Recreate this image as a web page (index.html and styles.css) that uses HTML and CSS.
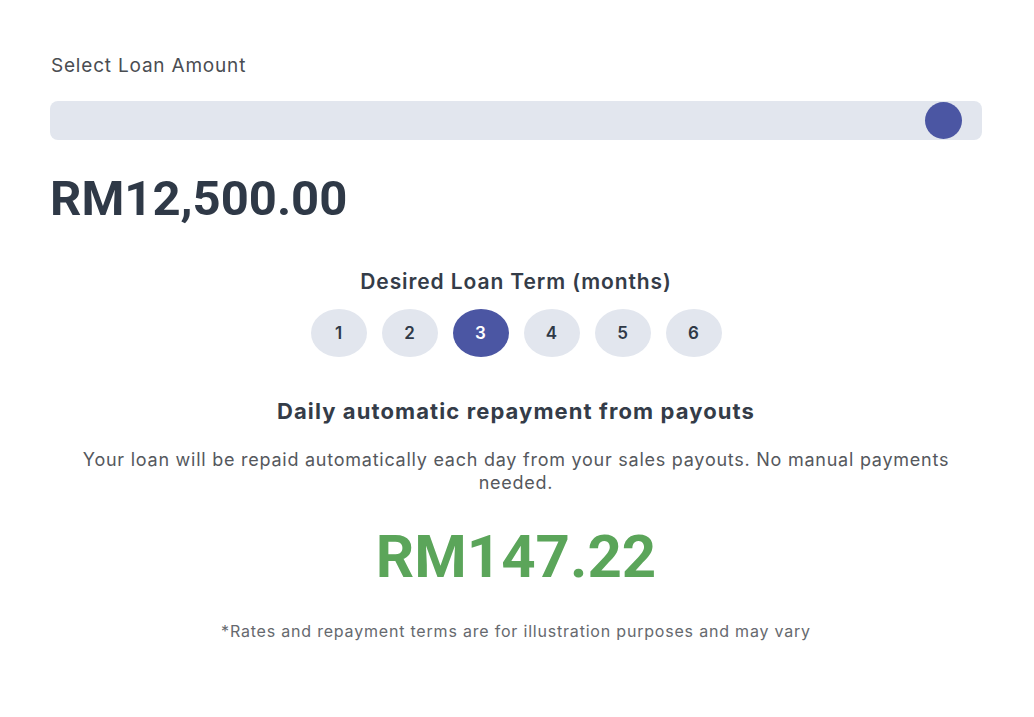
FILE: index.html
```html
<!DOCTYPE html>
<html lang="en">
<head>
    <meta charset="UTF-8">
    <meta name="viewport" content="width=device-width, initial-scale=1.0">
    <title>Loan Calculator</title>
    <link rel="stylesheet" href="styles.css">
</head>
<body>
    <div class="calculator">
        <label class="field-label">Select Loan Amount</label>

        <div class="amount-slider">
            <div class="slider-thumb"></div>
        </div>

        <div class="loan-amount">RM12,500.00</div>

        <div class="term-section">
            <h3 class="term-title">Desired Loan Term (months)</h3>
            <div class="term-options">
                <button class="term-option">1</button>
                <button class="term-option">2</button>
                <button class="term-option active">3</button>
                <button class="term-option">4</button>
                <button class="term-option">5</button>
                <button class="term-option">6</button>
            </div>
        </div>

        <div class="repayment">
            <h3 class="repayment-title">Daily automatic repayment from payouts</h3>
            <p class="repayment-text">Your loan will be repaid automatically each day from your sales payouts. No manual payments needed.</p>
            <div class="repayment-amount">RM147.22</div>
            <p class="disclaimer">*Rates and repayment terms are for illustration purposes and may vary</p>
        </div>
    </div>
</body>
</html>
```

FILE: styles.css
```css
body {
    margin: 0;
    background: #ffffff;
    font-family: Inter, "Liberation Sans", sans-serif;
    color: #333c48;
}

.calculator {
    padding: 54px 52px 40px 50px;
}

.field-label {
    display: block;
    margin-left: 1px;
    font-size: 19px;
    letter-spacing: 0.8px;
    color: #4a4d52;
    line-height: 24px;
}

.amount-slider {
    margin-top: 23px;
    height: 39px;
    background: #e2e6ee;
    border-radius: 8px;
    display: flex;
    align-items: center;
    justify-content: flex-end;
    padding-right: 20px;
}

.slider-thumb {
    width: 37px;
    height: 37px;
    border-radius: 50%;
    background: #4b56a3;
}

/* big money figures use a narrower face */
.loan-amount,
.repayment-amount {
    font-family: Roboto, "Liberation Sans", sans-serif;
    font-weight: 700;
}

.loan-amount {
    margin-top: 30px;
    font-size: 49px;
    color: #2f3947;
    line-height: 58px;
}

.term-section {
    margin-top: 40px;
    text-align: center;
}

.term-title {
    margin: 0;
    font-size: 21px;
    font-weight: 600;
    letter-spacing: 0.9px;
    line-height: 28px;
    color: #343c48;
}

.term-options {
    display: flex;
    justify-content: center;
    gap: 15px;
    margin-top: 13px;
}

.term-option {
    width: 56px;
    height: 48px;
    border: none;
    border-radius: 50%;
    background: #e2e6ee;
    font-family: inherit;
    font-size: 17px;
    font-weight: 600;
    color: #2f3947;
}

.term-option.active {
    background: #4b56a3;
    color: #ffffff;
}

.repayment {
    margin-top: 40px;
    text-align: center;
}

.repayment-title {
    margin: 0;
    font-size: 22px;
    font-weight: 700;
    letter-spacing: 1.1px;
    line-height: 28px;
    color: #343c48;
}

.repayment-text {
    margin: 23px auto 0;
    max-width: 890px;
    font-size: 18px;
    letter-spacing: 0.75px;
    line-height: 23px;
    color: #55585d;
}

.repayment-amount {
    margin-top: 28px;
    font-size: 60px;
    color: #5ba55a;
    line-height: 70px;
}

.disclaimer {
    margin: 29px 0 0;
    font-size: 16px;
    letter-spacing: 0.8px;
    line-height: 20px;
    color: #66696e;
}
```
